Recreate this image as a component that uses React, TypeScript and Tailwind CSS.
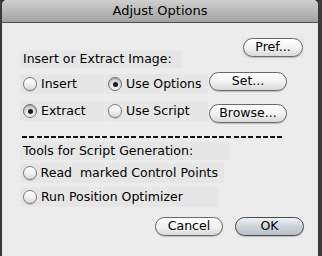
import React from "react";

const font = { fontFamily: '"DejaVu Sans", "Liberation Sans", sans-serif' };

const Radio = ({ checked, label }: { checked?: boolean; label: string }) => (
  <div className="flex items-center h-[20px] pl-[3px] pr-[6px] bg-[#e6e6e6]">
    <span
      className={
        checked
          ? "flex items-center justify-center w-[14px] h-[14px] rounded-full border border-[#6e6e6e] bg-gradient-to-b from-[#c9ccd2] to-[#f4f5f7] shadow-[inset_0_1px_1px_rgba(0,0,0,0.25)]"
          : "flex items-center justify-center w-[14px] h-[14px] rounded-full border border-[#7a7a7a] bg-gradient-to-b from-[#ffffff] via-[#f2f2f2] to-[#d8d8d8] shadow-[0_1px_1px_rgba(0,0,0,0.15)]"
      }
    >
      {checked && <span className="w-[5px] h-[5px] rounded-full bg-[#1a1a1a]" />}
    </span>
    <span className="ml-[4px] text-[12.5px] text-black whitespace-pre leading-none">{label}</span>
  </div>
);

const Button = ({ label, w, primary }: { label: string; w: string; primary?: boolean }) => (
  <button
    className={
      (primary
        ? "border-[#4a4a4a] bg-gradient-to-b from-[#eef1f5] via-[#cfd4dc] to-[#b9c0ca] "
        : "border-[#6a6a6a] bg-gradient-to-b from-[#ffffff] via-[#f3f3f3] to-[#d9d9d9] ") +
      w +
      " h-[19px] rounded-full border text-[12.5px] text-black leading-none flex items-center justify-center shadow-[0_1px_1px_rgba(0,0,0,0.2)]"
    }
  >
    {label}
  </button>
);

export default function App() {
  return (
    <div className="w-[322px] h-[256px] bg-[#3b3b3b] pl-[2px] pr-[4px] overflow-hidden" style={font}>
      <div className="w-[316px] h-[256px] bg-[#ececec] rounded-t-[5px] overflow-hidden flex flex-col">
        {/* title bar */}
        <div className="h-[23px] shrink-0 flex items-center justify-center bg-gradient-to-b from-[#cfcfcf] to-[#a3a3a3] border-b border-[#505050]">
          <span className="text-[13px] text-black">Adjust Options</span>
        </div>

        <div className="relative flex-1 pl-[18px]">
          {/* top row: label + Pref */}
          <div className="flex items-start h-[46px] pt-[14px]">
            <div className="mt-[14px] h-[17px] pl-[3px] pr-[10px] bg-[#e6e6e6] flex items-center text-[12.5px] text-black">
              Insert or Extract Image:
            </div>
            <div className="ml-auto mr-[14px] p-[1px] bg-[#e8e8e8]">
              <Button label="Pref..." w="w-[60px]" />
            </div>
          </div>

          {/* radios + side buttons */}
          <div className="flex mt-[5px]">
            <div className="w-[84px] flex flex-col gap-[7px]">
              <Radio label="Insert" />
              <Radio checked label="Extract" />
            </div>
            <div className="w-[104px] flex flex-col gap-[7px] pl-[1px]">
              <Radio checked label="Use Options" />
              <Radio label="Use Script" />
            </div>
            <div className="flex flex-col gap-[13px] mt-[-2px] ml-[1px]">
              <Button label="Set..." w="w-[78px]" />
              <Button label="Browse..." w="w-[78px]" />
            </div>
          </div>

          {/* dashed separator */}
          <div className="mt-[13px] ml-[2px] w-[262px] h-[2px] bg-[repeating-linear-gradient(90deg,#111_0_5px,transparent_5px_7.3px)]" />

          <div className="mt-[4px] h-[18px] w-[210px] pl-[3px] flex items-center bg-[#e6e6e6] text-[12.5px] text-black">
            Tools for Script Generation:
          </div>

          <div className="mt-[3px] flex flex-col gap-[4px]">
            <div className="w-[204px]">
              <Radio label="Read  marked Control Points" />
            </div>
            <div className="w-[198px]">
              <Radio label="Run Position Optimizer" />
            </div>
          </div>

          <div className="flex justify-end gap-[12px] mr-[14px] mt-[10px]">
            <Button label="Cancel" w="w-[68px]" />
            <Button label="OK" w="w-[69px]" primary />
          </div>
        </div>
      </div>
    </div>
  );
}
